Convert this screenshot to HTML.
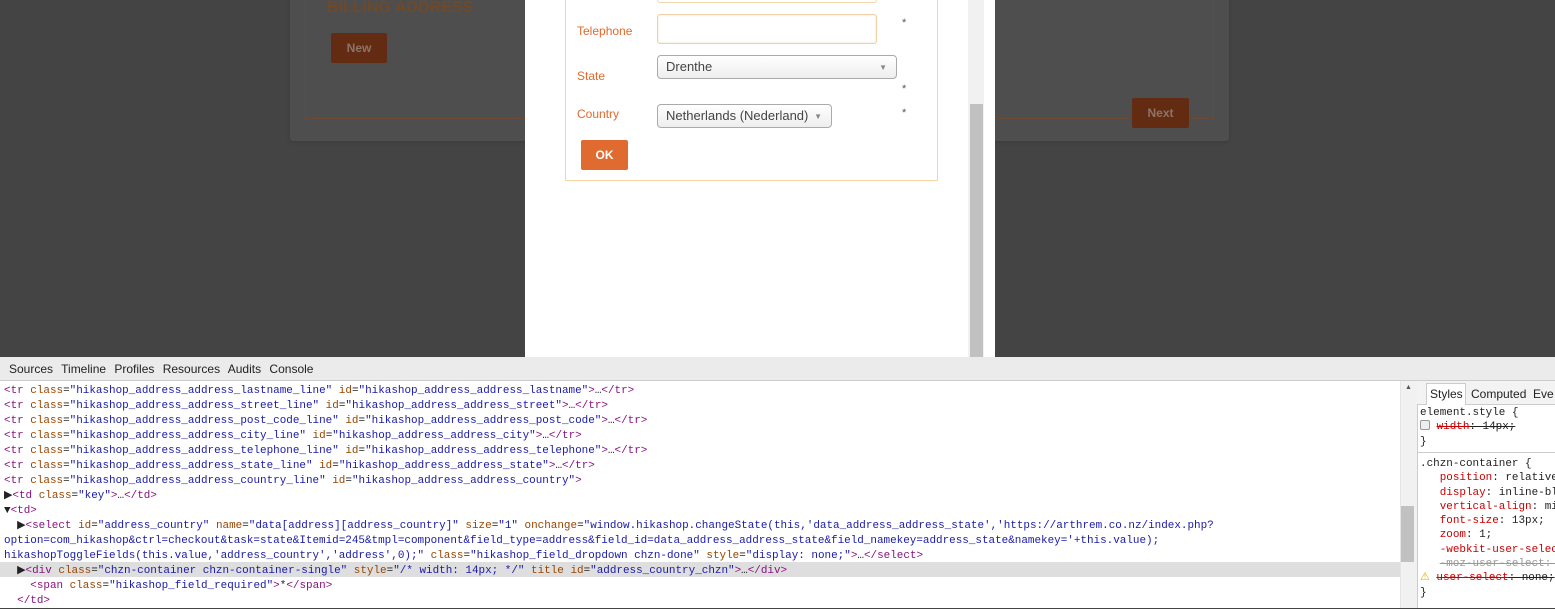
<!DOCTYPE html>
<html><head><style>
*{margin:0;padding:0;box-sizing:border-box}
body{width:1555px;height:608px;position:relative;overflow:hidden;background:#444;font-family:"Liberation Sans",sans-serif}
.a{position:absolute}
.code{font-family:"Liberation Mono",monospace;font-size:10.95px;line-height:15px;white-space:pre;color:#222}
.t{color:#881280}.n{color:#994500}.v{color:#1a1aa6}
.lbl{color:#e0692c;font-size:12px}
.sel{border:1px solid #aaa;border-radius:4px;background:linear-gradient(#fff,#eee);font-size:13px;color:#444;padding:3px 8px;height:24px}
.arr{position:absolute;right:9px;top:7px;font-size:8px;color:#888}
.st{color:#555;font-size:11px}
.css{font-family:"Liberation Mono",monospace;font-size:10.95px;line-height:14.3px;white-space:pre;color:#222}
.r{color:#c80000}
</style></head><body>
<div class="a" style="left:290px;top:-10px;width:939px;height:151px;background:#4e4e4e;border-radius:3px;box-shadow:0 1px 3px #3a3a3a"></div>
<div class="a" style="left:305px;top:-10px;width:909px;height:129px;border:1px solid #6a4a33"></div>
<div class="a" style="left:327px;top:-1px;font-size:16px;line-height:18px;font-weight:bold;color:#6e4a2a;white-space:nowrap">BILLING ADDRESS</div>
<div class="a" style="left:331px;top:33px;width:56px;height:30px;background:#632c12;border-radius:2px;color:#8c7466;font-weight:bold;font-size:12px;text-align:center;line-height:30px">New</div>
<div class="a" style="left:1132px;top:98px;width:57px;height:30px;background:#632c12;border-radius:2px;color:#8c7466;font-weight:bold;font-size:12px;text-align:center;line-height:30px">Next</div>
<div class="a" style="left:525px;top:0;width:470px;height:357px;background:#fff"></div>
<div class="a" style="left:968px;top:0;width:16px;height:357px;background:#f1f1f1"></div>
<div class="a" style="left:970px;top:104px;width:13px;height:253px;background:#c1c1c1"></div>
<div class="a" style="left:565px;top:-5px;width:373px;height:186px;border:1px solid #f6d4a4"></div>
<div class="a" style="left:657px;top:-10px;width:220px;height:13px;border:1px solid #f3d5b0;border-radius:3px"></div>
<div class="a lbl" style="left:577px;top:24px">Telephone</div>
<div class="a" style="left:657px;top:14px;width:220px;height:30px;border:1px solid #f0d0a8;border-radius:3px;box-shadow:inset 0 0 2px #f5e0c5"></div>
<div class="a st" style="left:902px;top:17px">*</div>
<div class="a lbl" style="left:577px;top:69px">State</div>
<div class="a sel" style="left:657px;top:55px;width:240px">Drenthe<span class="arr">▼</span></div>
<div class="a st" style="left:902px;top:83px">*</div>
<div class="a lbl" style="left:577px;top:107px">Country</div>
<div class="a sel" style="left:657px;top:104px;width:175px">Netherlands (Nederland)<span class="arr">▼</span></div>
<div class="a st" style="left:902px;top:107px">*</div>
<div class="a" style="left:581px;top:140px;width:47px;height:30px;background:#e06b30;border-radius:2px;color:#fff;font-weight:bold;font-size:12px;text-align:center;line-height:30px">OK</div>
<div class="a" style="left:0;top:357px;width:1555px;height:251px;background:#fff"></div>
<div class="a" style="left:0;top:357px;width:1555px;height:24px;background:#ebebeb;border-bottom:1px solid #ccc;font-size:12px;color:#222;padding:5px 0 0 9px;word-spacing:5px">Sources Timeline Profiles Resources Audits Console</div>
<div class="a" style="left:0;top:562px;width:1400px;height:15px;background:#dedede"></div>
<div class="a code" style="left:4px;top:384px"><span class="t">&lt;tr </span><span class="n">class</span>=<span class="v">"hikashop_address_address_lastname_line"</span> <span class="n">id</span>=<span class="v">"hikashop_address_address_lastname"</span><span class="t">&gt;</span>…<span class="t">&lt;/tr&gt;</span>
<span class="t">&lt;tr </span><span class="n">class</span>=<span class="v">"hikashop_address_address_street_line"</span> <span class="n">id</span>=<span class="v">"hikashop_address_address_street"</span><span class="t">&gt;</span>…<span class="t">&lt;/tr&gt;</span>
<span class="t">&lt;tr </span><span class="n">class</span>=<span class="v">"hikashop_address_address_post_code_line"</span> <span class="n">id</span>=<span class="v">"hikashop_address_address_post_code"</span><span class="t">&gt;</span>…<span class="t">&lt;/tr&gt;</span>
<span class="t">&lt;tr </span><span class="n">class</span>=<span class="v">"hikashop_address_address_city_line"</span> <span class="n">id</span>=<span class="v">"hikashop_address_address_city"</span><span class="t">&gt;</span>…<span class="t">&lt;/tr&gt;</span>
<span class="t">&lt;tr </span><span class="n">class</span>=<span class="v">"hikashop_address_address_telephone_line"</span> <span class="n">id</span>=<span class="v">"hikashop_address_address_telephone"</span><span class="t">&gt;</span>…<span class="t">&lt;/tr&gt;</span>
<span class="t">&lt;tr </span><span class="n">class</span>=<span class="v">"hikashop_address_address_state_line"</span> <span class="n">id</span>=<span class="v">"hikashop_address_address_state"</span><span class="t">&gt;</span>…<span class="t">&lt;/tr&gt;</span>
<span class="t">&lt;tr </span><span class="n">class</span>=<span class="v">"hikashop_address_address_country_line"</span> <span class="n">id</span>=<span class="v">"hikashop_address_address_country"</span><span class="t">&gt;</span>
</div>
<div class="a code" style="left:4px;top:489px">▶<span class="t">&lt;td </span><span class="n">class</span>=<span class="v">"key"</span><span class="t">&gt;</span>…<span class="t">&lt;/td&gt;</span>
▼<span class="t">&lt;td&gt;</span>
  ▶<span class="t">&lt;select </span><span class="n">id</span>=<span class="v">"address_country"</span> <span class="n">name</span>=<span class="v">"data[address][address_country]"</span> <span class="n">size</span>=<span class="v">"1"</span> <span class="n">onchange</span>=<span class="v">"window.hikashop.changeState(this,'data_address_address_state','https://arthrem.co.nz/index.php?</span>
<span class="v">option=com_hikashop&amp;ctrl=checkout&amp;task=state&amp;Itemid=245&amp;tmpl=component&amp;field_type=address&amp;field_id=data_address_address_state&amp;field_namekey=address_state&amp;namekey='+this.value);</span>
<span class="v">hikashopToggleFields(this.value,'address_country','address',0);"</span> <span class="n">class</span>=<span class="v">"hikashop_field_dropdown chzn-done"</span> <span class="n">style</span>=<span class="v">"display: none;"</span><span class="t">&gt;</span>…<span class="t">&lt;/select&gt;</span>
  ▶<span class="t">&lt;div </span><span class="n">class</span>=<span class="v">"chzn-container chzn-container-single"</span> <span class="n">style</span>=<span class="v">"/* width: 14px; */"</span> <span class="n">title</span> <span class="n">id</span>=<span class="v">"address_country_chzn"</span><span class="t">&gt;</span>…<span class="t">&lt;/div&gt;</span>
    <span class="t">&lt;span </span><span class="n">class</span>=<span class="v">"hikashop_field_required"</span><span class="t">&gt;</span>*<span class="t">&lt;/span&gt;</span>
  <span class="t">&lt;/td&gt;</span></div>
<div class="a" style="left:1400px;top:381px;width:17px;height:227px;background:#f1f1f1;border-left:1px solid #e5e5e5"></div>
<div class="a" style="left:1405px;top:384px;font-size:7px;color:#555">▲</div>
<div class="a" style="left:1401px;top:506px;width:13px;height:56px;background:#c1c1c1"></div>
<div class="a" style="left:1417px;top:381px;width:138px;height:227px;background:#fff;border-left:1px solid #ccc"></div>
<div class="a" style="left:1417px;top:381px;width:138px;height:24px;background:#f3f3f3;border-bottom:1px solid #ccc"></div>
<div class="a" style="left:1426px;top:383px;width:40px;height:22px;background:#fff;border:1px solid #ccc;border-bottom:none;font-size:12px;padding:3px 0 0 3px;color:#222">Styles</div>
<div class="a" style="left:1471px;top:387px;font-size:12px;color:#222;white-space:nowrap">Computed&nbsp;&nbsp;Eve</div>
<div class="a css" style="left:1420px;top:406px">element.style {
<span style="display:inline-block;width:10px;height:10px;border:1px solid #999;border-radius:2px;background:#eee;vertical-align:-1px"></span> <s class="r">width</s><s>: 14px;</s>
}</div>
<div class="a" style="left:1417px;top:452px;width:138px;height:1px;background:#ccc"></div>
<div class="a css" style="left:1420px;top:457px">.chzn-container {
   <span class="r">position</span>: relative
   <span class="r">display</span>: inline-bl
   <span class="r">vertical-align</span>: mi
   <span class="r">font-size</span>: 13px;
   <span class="r">zoom</span>: 1;
   <span class="r">-webkit-user-selec</span>
   <s style="color:#999">-moz-user-select: </s>
<span style="color:#e0b000">⚠</span> <s class="r">user-select</s><s>: none;</s>
}</div>
</body></html>
